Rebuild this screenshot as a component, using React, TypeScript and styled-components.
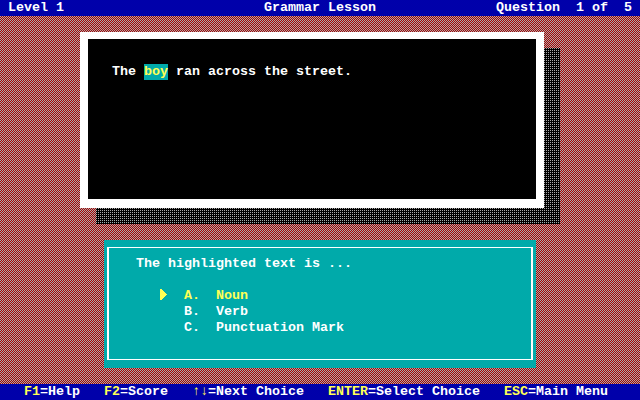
import styled, { createGlobalStyle } from 'styled-components';

const GlobalStyle = createGlobalStyle`
  html, body {
    margin: 0;
    padding: 0;
    background: #000;
  }
`;

// 2x2 dither tiles, same as the old EGA fill patterns
const checkerTile = `url("data:image/svg+xml,%3Csvg xmlns='http://www.w3.org/2000/svg' width='2' height='2' shape-rendering='crispEdges'%3E%3Crect width='2' height='2' fill='%23aa0000'/%3E%3Crect width='1' height='1' fill='%23aaaaaa'/%3E%3Crect x='1' y='1' width='1' height='1' fill='%23aaaaaa'/%3E%3C/svg%3E")`;
const shadowTile = `url("data:image/svg+xml,%3Csvg xmlns='http://www.w3.org/2000/svg' width='2' height='2' shape-rendering='crispEdges'%3E%3Crect width='2' height='2' fill='%23000000'/%3E%3Crect width='1' height='1' fill='%23aaaaaa'/%3E%3C/svg%3E")`;

const options = [
  { key: 'A.', label: 'Noun', selected: true },
  { key: 'B.', label: 'Verb', selected: false },
  { key: 'C.', label: 'Punctuation Mark', selected: false },
];

const hints = [
  { key: 'F1', action: 'Help' },
  { key: 'F2', action: 'Score' },
  { key: '↑↓', action: 'Next Choice' },
  { key: 'ENTER', action: 'Select Choice' },
  { key: 'ESC', action: 'Main Menu' },
];

const App = () => {
  return (
    <Screen>
      <GlobalStyle />
      <TopBar>
        <span>Level 1</span>
        <span>Grammar Lesson</span>
        <span>Question  1 of  5</span>
      </TopBar>
      <Stage>
        <SentencePanel>
          <Sentence>
            The <Highlight>boy</Highlight> ran across the street.
          </Sentence>
        </SentencePanel>
        <QuestionBox>
          <QuestionFrame>
            <Prompt>The highlighted text is ...</Prompt>
            <OptionList>
              {options.map(option => (
                <OptionRow key={option.key} $selected={option.selected}>
                  <Marker>
                    {option.selected && (
                      <svg width="7" height="11" viewBox="0 0 7 11" shapeRendering="crispEdges">
                        <path
                          d="M0 0h2v1h1v1h1v1h1v1h1v1h1v1h-1v1h-1v1h-1v1h-1v1h-1v1h-2z"
                          fill="#ffff55"
                        />
                      </svg>
                    )}
                  </Marker>
                  <span>{option.key}</span>
                  <span>{option.label}</span>
                </OptionRow>
              ))}
            </OptionList>
          </QuestionFrame>
        </QuestionBox>
      </Stage>
      <BottomBar>
        {hints.map(hint => (
          <span key={hint.key}>
            <HintKey>{hint.key}</HintKey>={hint.action}
          </span>
        ))}
      </BottomBar>
    </Screen>
  );
};

export default App;

const Screen = styled.div`
  display: flex;
  flex-direction: column;
  width: 640px;
  height: 400px;
  overflow: hidden;
  color: #ffffff;
  font-family: 'Liberation Mono', monospace;
  font-size: 13.34px;
  font-weight: 700;
  line-height: 16px;
  white-space: pre;
`;

const TopBar = styled.div`
  display: grid;
  grid-template-columns: 256px 232px 1fr;
  flex: 0 0 16px;
  padding-left: 8px;
  background-color: #0000aa;
`;

const Stage = styled.div`
  flex: 1;
  isolation: isolate;
  padding: 16px 0 0 80px;
  background-color: #aa5555;
  background-image: ${checkerTile};
  background-size: 2px 2px;
`;

const SentencePanel = styled.div`
  position: relative;
  box-sizing: border-box;
  width: 464px;
  height: 176px;
  padding: 25px 24px 0;
  border: solid #ffffff;
  border-width: 7px 8px 9px;
  background-color: #000000;

  &::after {
    content: '';
    position: absolute;
    z-index: -1;
    top: 9px;
    left: 8px;
    right: -24px;
    bottom: -25px;
    background-color: #000000;
    background-image: ${shadowTile};
    background-size: 2px 2px;
  }
`;

const Sentence = styled.div`
  height: 16px;
`;

const Highlight = styled.span`
  display: inline-block;
  height: 16px;
  background-color: #00aaaa;
  color: #ffff55;
`;

const QuestionBox = styled.div`
  box-sizing: border-box;
  width: 432px;
  height: 128px;
  margin: 32px 0 0 24px;
  padding: 7px 3px 8px;
  background-color: #00aaaa;
`;

const QuestionFrame = styled.div`
  box-sizing: border-box;
  height: 100%;
  padding: 8px 0 0 27px;
  border: solid #ffffff;
  border-width: 1px 2px;
`;

const Prompt = styled.div`
  height: 16px;
`;

const OptionList = styled.div`
  display: flex;
  flex-direction: column;
  margin: 16px 0 0 24px;
`;

const OptionRow = styled.div<{ $selected: boolean }>`
  display: grid;
  grid-template-columns: 24px 32px 1fr;
  height: 16px;
  color: ${props => (props.$selected ? '#ffff55' : '#ffffff')};
`;

const Marker = styled.div`
  display: flex;
  align-items: flex-start;
  padding-top: 1px;
`;

const BottomBar = styled.div`
  display: flex;
  flex: 0 0 16px;
  gap: 24px;
  padding-left: 24px;
  background-color: #0000aa;
`;

const HintKey = styled.span`
  color: #ffff55;
`;
